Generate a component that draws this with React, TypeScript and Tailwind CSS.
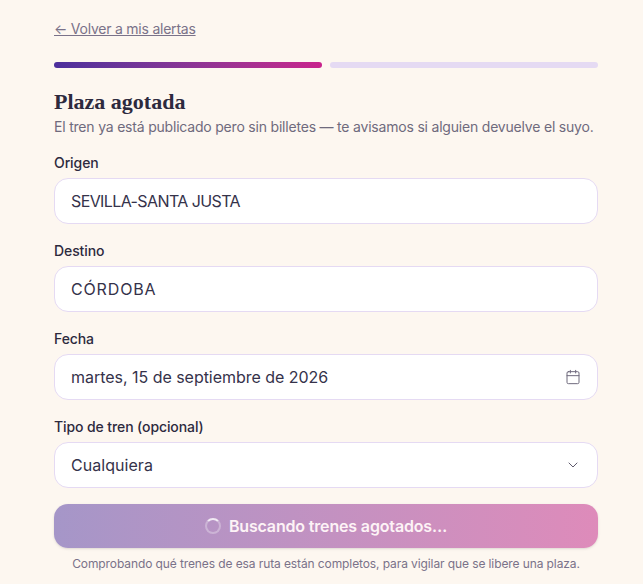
import type { ReactNode } from "react";
import { Calendar, ChevronDown } from "lucide-react";

function Field({ label, value, icon, track }: { label: string; value: string; icon?: ReactNode; track: string }) {
  return (
    <div className="flex flex-col">
      <div className="text-[14px] leading-[20px] font-medium tracking-[-0.1px] text-[#2d2a3e] mb-[5px]">{label}</div>
      <div className="h-[46px] rounded-[14px] border border-[#e5daf3] bg-white flex items-center justify-between pl-[16px] pr-[16px] text-[16px] text-[#35324a]">
        <span className={track}>{value}</span>
        {icon}
      </div>
    </div>
  );
}

export default function App() {
  return (
    <div className="min-h-[584px] bg-[#fdf7f0] font-['Inter',sans-serif] overflow-hidden">
      <div className="w-[544px] ml-[54px] pt-[20px]">
        <a className="block text-[14px] leading-[18px] tracking-[-0.23px] text-[#7a7289] underline">← Volver a mis alertas</a>
        <div className="flex gap-[8px] mt-[24px]">
          <div className="h-[6px] flex-1 rounded-full bg-gradient-to-r from-[#4c2f9c] to-[#c9228c]" />
          <div className="h-[6px] flex-1 rounded-full bg-[#e5daf3]" />
        </div>
        <h1 className="mt-[20px] text-[22px] leading-[28px] font-bold text-[#2d2a3e] font-['Liberation_Serif',serif]">Plaza agotada</h1>
        <p className="mt-[1px] text-[14px] leading-[20px] tracking-[-0.2px] text-[#6f6a7d]">El tren ya está publicado pero sin billetes — te avisamos si alguien devuelve el suyo.</p>
        <div className="flex flex-col gap-[17px] mt-[16px]">
          <Field label="Origen" value="SEVILLA-SANTA JUSTA" track="tracking-[-0.6px]" />
          <Field label="Destino" value="CÓRDOBA" track="tracking-[0.85px]" />
          <Field label="Fecha" value="martes, 15 de septiembre de 2026" track="tracking-[-0.03px]" icon={<Calendar size={16} strokeWidth={1.5} className="text-[#6f6a7d]" />} />
          <Field label="Tipo de tren (opcional)" value="Cualquiera" track="tracking-[0.05px]" icon={<ChevronDown size={16} strokeWidth={1.5} className="text-[#5f5a6d]" />} />
        </div>
        <button className="mt-[16px] w-full h-[44px] rounded-[14px] bg-gradient-to-r from-[#a596c8] to-[#de8bba] flex items-center justify-center gap-[8px] text-[16px] font-semibold tracking-[-0.16px] text-[#fdf3f6] shadow-sm">
          <span className="w-[16px] h-[16px] rounded-full border-2 border-white/30 border-t-white/80" />
          Buscando trenes agotados…
        </button>
        <p className="mt-[8px] text-center text-[12px] leading-[16px] tracking-[-0.1px] text-[#7a7289]">Comprobando qué trenes de esa ruta están completos, para vigilar que se libere una plaza.</p>
      </div>
    </div>
  );
}
